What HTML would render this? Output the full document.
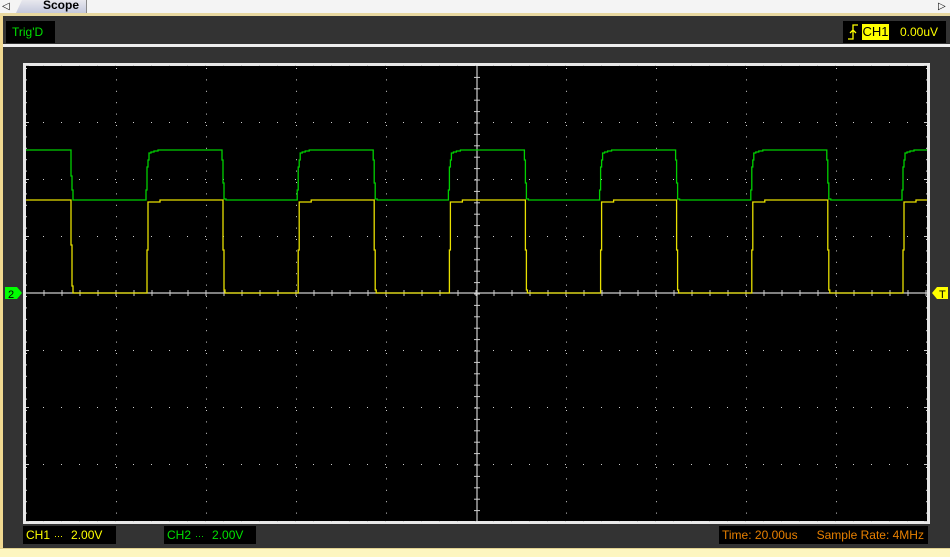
<!DOCTYPE html>
<html><head><meta charset="utf-8"><style>
html,body{margin:0;padding:0;width:950px;height:556px;overflow:hidden;background:#f2f2f2;font-family:"Liberation Sans",sans-serif}
.abs{position:absolute}
</style></head><body>
<div class="abs" style="left:0;top:0;width:950px;height:13px;background:#f4f4f4"></div>
<div class="abs" style="left:2px;top:1px;font-size:10px;color:#000">&#9665;</div>
<div class="abs" style="left:938px;top:1px;font-size:10px;color:#000">&#9655;</div>
<div class="abs" style="left:16px;top:0;width:70px;height:13px;background:linear-gradient(#e8e8ee,#c4c8dc);border-right:1px solid #888;clip-path:polygon(6px 0,100% 0,100% 100%,0 100%)"></div>
<div class="abs" style="left:43px;top:-2px;font-size:12px;font-weight:bold;color:#000">Scope</div>
<div class="abs" style="left:0;top:13px;width:950px;height:3px;background:#e8d8a0"></div>
<div class="abs" style="left:0;top:16px;width:3px;height:540px;background:#f0d890"></div>
<div class="abs" style="left:3px;top:16px;width:947px;height:532px;background:#333"></div>
<div class="abs" style="left:0;top:548px;width:950px;height:8px;background:#fdf6c0;border-top:1px solid #e0d090"></div>
<div class="abs" style="left:3px;top:44px;width:947px;height:3px;background:#eee"></div>
<div class="abs" style="left:6px;top:21px;width:49px;height:22px;background:#000;color:#00e000;font-size:12px;line-height:22px;text-indent:6px">Trig'D</div>
<div class="abs" style="left:843px;top:21px;width:103px;height:22px;background:#000"></div>
<svg class="abs" style="left:846px;top:22px" width="14" height="20"><path d="M2 17H7V3H12M4 11L7 8L10 11" stroke="#ff0" stroke-width="1.3" fill="none"/></svg>
<div class="abs" style="left:862px;top:24px;width:27px;height:16px;background:#ff0;color:#000;font-size:13px;line-height:16px;text-align:center">CH1</div>
<div class="abs" style="left:900px;top:24px;color:#ff0;font-size:12px;line-height:16px">0.00uV</div>
<div class="abs" style="left:23px;top:63px;width:901px;height:455px;border:3px solid #e8e8e8;background:#000"></div>
<svg class="abs" style="left:0;top:0" width="950" height="556" id="s"></svg>
<div class="abs" style="left:23px;top:526px;width:93px;height:18px;background:#000;color:#ff0;font-size:12px;line-height:18px"><span style="margin-left:3px">CH1</span><span style="margin-left:4px;font-size:9px">&#8943;</span><span style="margin-left:8px">2.00V</span></div>
<div class="abs" style="left:164px;top:526px;width:92px;height:18px;background:#000;color:#00e000;font-size:12px;line-height:18px"><span style="margin-left:3px">CH2</span><span style="margin-left:4px;font-size:9px">&#8943;</span><span style="margin-left:8px">2.00V</span></div>
<div class="abs" style="left:719px;top:526px;width:209px;height:18px;background:#000;color:#e88000;font-size:12px;line-height:18px"><span style="margin-left:3px">Time: 20.00us</span><span style="margin-left:19px">Sample Rate: 4MHz</span></div>
<script>
var s=document.getElementById('s'),h='';
var L=26,R=927,T=66,B=521,cx=477,cy=293;
for(var i=0;i<=10;i++){var x=L+i*90;if(i==5)continue;for(var y=T+2;y<B;y+=11.4)h+='<rect x="'+x+'" y="'+y.toFixed(1)+'" width="1" height="1" fill="#ccc"/>';}
for(var j=0;j<=8;j++){var y=T+j*57-1;if(j==4)continue;for(var x=L+17;x<R;x+=18)h+='<rect x="'+x+'" y="'+y+'" width="1" height="1" fill="#ccc"/>';h+='<rect x="'+L+'" y="'+y+'" width="3" height="1" fill="#ccc"/><rect x="'+(R-3)+'" y="'+y+'" width="3" height="1" fill="#ccc"/>';}
var g='M26 150H71V176H72V190H73V200',yl='M26 200H71V245H72V286H73V293';
for(var k=0;k<6;k++){var r=146+k*151.2,f=r+76;
g+='H'+r+'V190H'+(r+1)+'V167H'+(r+2)+'V160H'+(r+3)+'V153H'+(r+5)+'V152H'+(r+8)+'V151H'+(r+12)+'V150';
yl+='H'+(r+1)+'V250H'+(r+2)+'V202H'+(r+14)+'V200';
if(f<R){g+='H'+f+'V160H'+(f+1)+'V183H'+(f+2)+'V199H'+(f+4)+'V200';yl+='H'+(f+1)+'V250H'+(f+2)+'V290H'+(f+3)+'V293';}}
g+='H'+R;yl+='H'+R;
h+='<line x1="'+L+'" y1="'+cy+'" x2="'+R+'" y2="'+cy+'" stroke="#ccc" stroke-width="1.2"/>';
h+='<line x1="'+cx+'" y1="'+T+'" x2="'+cx+'" y2="'+B+'" stroke="#ccc" stroke-width="1.2"/>';
for(var x=L+18;x<R;x+=18)h+='<line x1="'+x+'" y1="'+(cy-3)+'" x2="'+x+'" y2="'+(cy+3)+'" stroke="#ccc"/>';
for(var y=T+11.4;y<B;y+=11.4)h+='<line x1="'+(cx-3)+'" y1="'+y.toFixed(1)+'" x2="'+(cx+3)+'" y2="'+y.toFixed(1)+'" stroke="#ccc"/>';
h+='<path d="'+g+'" stroke="#00d000" stroke-width="1.3" fill="none"/>';
h+='<path d="'+yl+'" stroke="#e8e000" stroke-width="1.3" fill="none"/>';
h+='<path d="M5 287H17L22 293L17 299H5Z" fill="#00ff00"/><text x="8" y="298" font-size="11" font-family="Liberation Sans" fill="#000">2</text>';
h+='<path d="M948 287H937L932 293L937 299H948Z" fill="#ffff00"/><text x="939" y="298" font-size="11" font-family="Liberation Sans" fill="#000">T</text>';
s.innerHTML=h;
</script>
</body></html>
